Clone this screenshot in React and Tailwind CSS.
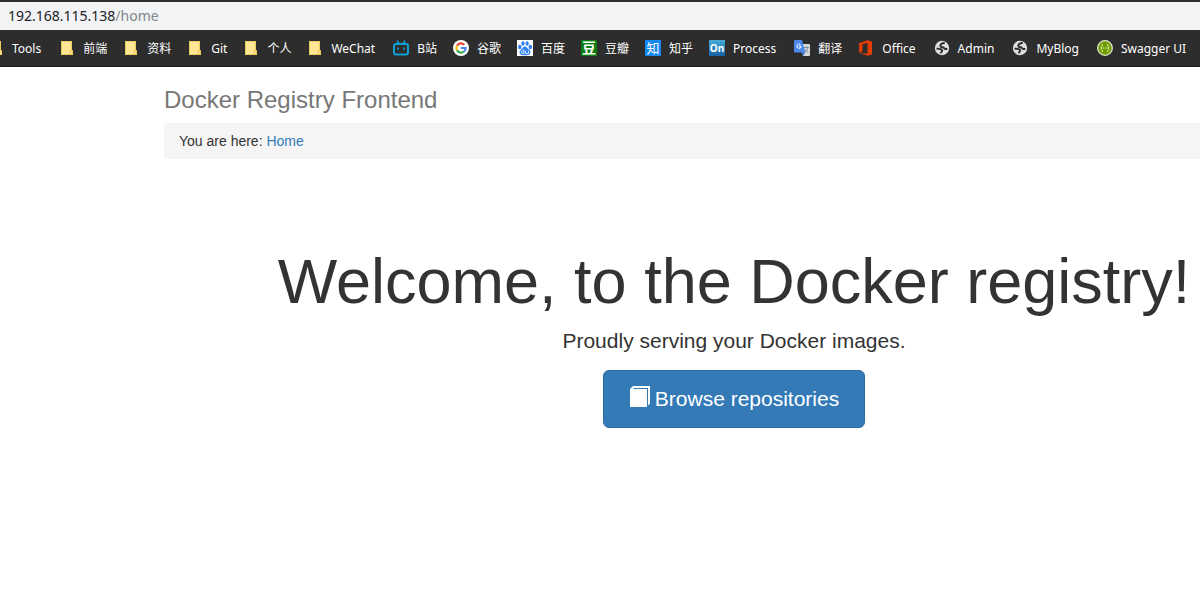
import React from "react";

function Folder() {
  return (
    <svg viewBox="0 0 16 16" className="size-4 shrink-0" aria-hidden="true">
      <path d="M2 1h11v9.500h1V15H2z" fill="#ffe694" />
      <path d="M2.500 1.500h10v9h1v4h-11z" fill="none" stroke="#edcb58" />
      <path d="M11.500 14V10.500h1" fill="none" stroke="#e3bd45" />
    </svg>
  );
}

function Bilibili() {
  return (
    <svg viewBox="0 0 16 16" className="size-4 shrink-0" fill="none" stroke="#0fa0d8" aria-hidden="true">
      <rect x="1" y="4" width="14" height="10.500" rx="2" strokeWidth="2" />
      <path d="M4 .8l2 2.600M12 .8l-2 2.600" strokeWidth="1.600" />
      <path d="M5 7.500v2.300M11 7.500v2.300" strokeWidth="1.600" />
    </svg>
  );
}

function Google() {
  return (
    <svg viewBox="0 0 16 16" className="size-4 shrink-0" aria-hidden="true">
      <circle cx="8" cy="8" r="8" fill="#fff" />
      <g fill="none" strokeWidth="2.200">
        <path d="M11.300 4.700A4.600 4.600 0 0 0 4 5.800" stroke="#ea4335" />
        <path d="M4 5.800a4.600 4.600 0 0 0 0 4.400" stroke="#fbbc05" />
        <path d="M4 10.200a4.600 4.600 0 0 0 7 1.300" stroke="#34a853" />
        <path d="M11 11.500A4.600 4.600 0 0 0 12.600 8H8" stroke="#4285f4" />
      </g>
    </svg>
  );
}

function Baidu() {
  return (
    <svg viewBox="0 0 16 16" className="size-4 shrink-0" aria-hidden="true">
      <rect width="16" height="16" fill="#fff" />
      <g fill="#2c80f5">
        <ellipse cx="2.800" cy="7" rx="1.700" ry="2.200" />
        <ellipse cx="6" cy="3.500" rx="1.600" ry="2.300" />
        <ellipse cx="10.200" cy="3.500" rx="1.600" ry="2.300" />
        <ellipse cx="13.300" cy="7" rx="1.700" ry="2.200" />
        <path d="M8 6.600c1.500 0 2.200 1.400 3.300 2.500 1.300 1.200 2.500 2.200 2.100 4-.4 2-2.300 2.300-5.400 2.100-3.100.2-5-.1-5.400-2.100-.4-1.800.8-2.800 2.100-4C5.800 8 6.500 6.600 8 6.600z" />
      </g>
      <path d="M7 9.500v4H5.500a1.200 1.200 0 0 1 0-2.500H7M8.700 11v2.500h2.800V11" fill="none" stroke="#fff" strokeWidth=".8" />
    </svg>
  );
}

function Office() {
  return (
    <svg viewBox="0 0 16 16" className="size-4 shrink-0" aria-hidden="true">
      <path d="M1 3.300 9.500.2 14 1.500v13L9.500 15.800 1 12.700l8.500 1V3L4.500 4.300v7.200L1 12.700z" fill="#e43c05" />
    </svg>
  );
}

function Translate() {
  return (
    <svg viewBox="0 0 16 16" className="size-4 shrink-0" aria-hidden="true">
      <path d="M6 4h9a1 1 0 0 1 1 1v10a1 1 0 0 1-1 1H9z" fill="#d8dade" />
      <path d="M10 7.500h5M12.500 6.300v1.200M14 7.500c-.5 2.500-2 4-3.500 5M11 9c.8 1.600 2 2.800 3.500 3.700" fill="none" stroke="#70889a" strokeWidth=".9" />
      <path d="M1 0h7l3.300 12.500H1a1 1 0 0 1-1-1V1a1 1 0 0 1 1-1z" fill="#4d88ee" />
      <path d="M8 12.500h3.300L9 16z" fill="#3564c5" />
      <path d="M6.500 4.700a2.100 2.100 0 1 0 .6 1.700H5" fill="none" stroke="#fff" />
    </svg>
  );
}

function Globe() {
  return (
    <svg viewBox="0 0 16 16" className="size-4 shrink-0" aria-hidden="true">
      <circle cx="8" cy="8" r="7.200" fill="#dedede" />
      <path
        d="M10.800 2.800C8.500 3.200 6.600 4 6.300 5.500c-.2 1.300 1 1.700 2.300 1.800 1.400.1 1.300 1 2.200 1.500.9.400 1.900.1 2.600.1M2.500 8.700c1.500-.3 2.600 0 3.800.4 1.400.5 2.300 1 1.800 2-.4.800-1.200 1.100-1.400 2.300"
        fill="none"
        stroke="#303030"
        strokeWidth="1.900"
      />
    </svg>
  );
}

function Swagger() {
  return (
    <svg viewBox="0 0 16 16" className="size-4 shrink-0" aria-hidden="true">
      <circle cx="8" cy="8" r="7.300" fill="#6c9c00" stroke="#e4eccf" strokeWidth="1.300" />
      <path d="M6 4.200c-1.700 0-.8 2.400-1.300 3.200L3.800 8l.9.600c.5.800-.4 3.200 1.300 3.200M10 4.200c1.700 0 .8 2.400 1.300 3.200l.9.600-.9.600c-.5.800.4 3.200-1.300 3.200" fill="none" stroke="#e8f2cf" />
      <path d="M5.900 8h.9M7.600 8h.9M9.300 8h.9" stroke="#e8f2cf" />
    </svg>
  );
}

const tile = "flex size-4 shrink-0 items-center justify-center leading-none text-white";

const Douban = () => <span aria-hidden="true" className={`${tile} bg-[#0a7c11] text-[14px] font-bold`}>豆</span>;
const Zhihu = () => <span aria-hidden="true" className={`${tile} bg-[#1288f2] text-[13px]`}>知</span>;
const ProcessOn = () => (
  <span aria-hidden="true" className={`${tile} bg-linear-to-b from-[#45abd8] to-[#1762a5] text-[10px] font-bold`}>On</span>
);

const bookmarks = [
  ["Tools", Folder],
  ["前端", Folder],
  ["资料", Folder],
  ["Git", Folder],
  ["个人", Folder],
  ["WeChat", Folder],
  ["B站", Bilibili],
  ["谷歌", Google],
  ["百度", Baidu],
  ["豆瓣", Douban],
  ["知乎", Zhihu],
  ["Process", ProcessOn],
  ["翻译", Translate],
  ["Office", Office],
  ["Admin", Globe],
  ["MyBlog", Globe],
  ["Swagger UI", Swagger],
];

export default function App() {
  return (
    <div className="min-h-screen overflow-x-hidden bg-white font-['Liberation_Sans','Noto_Sans_CJK_SC',sans-serif] text-[#333]">
      <header className="font-['Noto_Sans','Noto_Sans_CJK_SC',sans-serif]">
        <div className="border-t-2 border-[#2c2c2e] bg-[#f1f3f4] px-2 text-sm leading-7 text-[#202124]">
          192.168.115.138<span className="text-[#80868b]">/home</span>
        </div>
        <nav aria-label="Bookmarks" className="overflow-hidden border-b border-[#1c1c1c] bg-[#2d2d2d]">
          <ul className="-ml-3 flex h-9 items-center gap-4 text-xs text-white">
            {bookmarks.map(([name, Icon]) => (
              <li key={name} className="shrink-0">
                <a href="#" className="flex items-center gap-2 whitespace-nowrap">
                  <Icon />
                  <span className={name.length > 3 ? "pt-0.5 pr-0.5" : "pt-0.5"}>{name}</span>
                </a>
              </li>
            ))}
          </ul>
        </nav>
      </header>

      <div className="ml-[164px] w-[1140px]">
        <h1 className="pt-5 text-2xl leading-[26px] text-[#777]">Docker Registry Frontend</h1>
        <nav aria-label="Breadcrumb" className="mt-2.5 rounded bg-[#f5f5f5] px-[15px] py-2 text-sm">
          You are here: <a href="#" className="text-[#337ab7]">Home</a>
        </nav>
        <main className="flex flex-col items-center pt-[87px] text-center">
          <h2 className="text-[63px] leading-[70px]">Welcome, to the Docker registry!</h2>
          <p className="mt-2.5 text-[21px] leading-[30px]">Proudly serving your Docker images.</p>
          <button
            type="button"
            className="mt-[14px] flex h-[58px] items-center gap-1 rounded-md border border-[#2e6da4] bg-[#337ab7] px-[25px] text-[21px] text-white"
          >
            <svg viewBox="0 0 22 22" className="mb-1.5 size-[22px]" aria-hidden="true">
              <path d="M1 4 4 1h17v17.500L19 20.500V3H4.500v1H18v18H1z" fill="#fff" />
            </svg>
            Browse repositories
          </button>
        </main>
      </div>
    </div>
  );
}
